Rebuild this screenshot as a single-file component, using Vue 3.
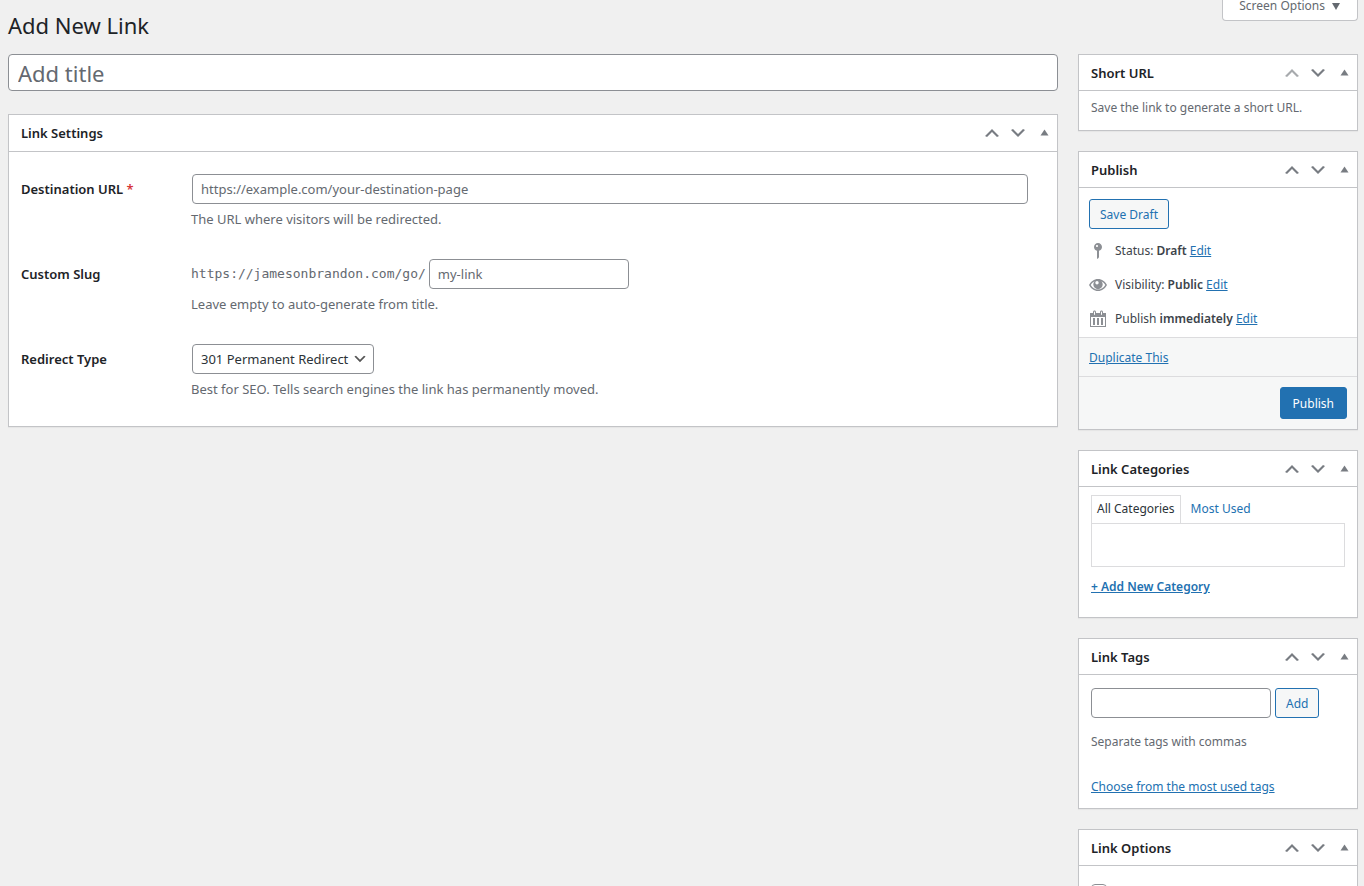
<script setup>
import { ref } from 'vue';

const title = ref('');
const destination = ref('');
const slug = ref('');
const redirectType = ref('301');
const newTag = ref('');
const noFollow = ref(false);

const redirectTypes = [
  { value: '301', label: '301 Permanent Redirect' },
  { value: '302', label: '302 Temporary Redirect' },
  { value: '307', label: '307 Temporary Redirect' }
];

// order buttons shown at the right of every box header
const handles = [
  { name: 'Move up', path: 'M15 14l-5-5-5 5-2-1 7-7 7 7z' },
  { name: 'Move down', path: 'M5 6l5 5 5-5 2 1-7 7-7-7z' },
  { name: 'Toggle panel', path: 'M6.5 12.5l4-6 4 6z' }
];

const publishRows = [
  {
    label: 'Status:',
    value: 'Draft',
    path: 'M13 6c0 1.86-1.28 3.41-3 3.86V16c0 1-2 2-2 2V9.86c-1.72-.45-3-2-3-3.86 0-2.21 1.79-4 4-4s4 1.79 4 4zM7 5c0 .55.45 1 1 1s1-.45 1-1-.45-1-1-1-1 .45-1 1z'
  },
  {
    label: 'Visibility:',
    value: 'Public',
    path: 'M9 4C5 4 2 6.500 0 10c2 3.500 5 6 9 6s7-2.500 9-6c-2-3.500-5-6-9-6zM9 14.500c-3.200 0-5.500-1.700-7.300-4.500C2.800 8.200 4 7 5.600 6.200a4.700 4.700 0 1 0 6.800 0c1.600.8 2.800 2 3.900 3.800-1.800 2.800-4.100 4.500-7.300 4.500zM8 6a1.700 1.700 0 1 1 0 3.400A1.700 1.700 0 0 1 8 6z'
  },
  {
    label: 'Publish',
    value: 'immediately',
    path: 'M14 4h3v14H1V4h3V3c0-.83.67-1.5 1.5-1.5S7 2.17 7 3v1h4V3c0-.83.67-1.5 1.5-1.5S14 2.17 14 3v1zM5 3v2.5c0 .28.22.5.5.5s.5-.22.5-.5V3c0-.28-.22-.5-.5-.5S5 2.72 5 3zm7 0v2.5c0 .28.22.5.5.5s.5-.22.5-.5V3c0-.28-.22-.5-.5-.5s-.5.22-.5.5zm4 14V8H2v9h14zM6 16V9H4v7h2zm4 0V9H8v7h2zm4 0V9h-2v7h2z'
  }
];
</script>

<template>
  <div class="wrap">
    <header class="page-head">
      <h1>Add New Link</h1>
      <button type="button" class="screen-options">
        Screen Options
        <svg viewBox="0 0 10 8" aria-hidden="true"><path d="M1 1h8L5 8z" /></svg>
      </button>
    </header>

    <div class="columns">
      <main class="main">
        <input v-model="title" class="field title" type="text" placeholder="Add title" aria-label="Add title">

        <section class="box settings">
          <div class="box-head">
            <h2>Link Settings</h2>
            <div class="handles">
              <button v-for="h in handles" :key="h.name" type="button" :aria-label="h.name">
                <svg viewBox="0 0 20 20"><path :d="h.path" /></svg>
              </button>
            </div>
          </div>
          <div class="form">
            <div class="row">
              <label for="destination">Destination URL <span class="required">*</span></label>
              <div class="cell">
                <div class="control">
                  <input id="destination" v-model="destination" class="field wide" type="url" placeholder="https://example.com/your-destination-page">
                </div>
                <p>The URL where visitors will be redirected.</p>
              </div>
            </div>
            <div class="row">
              <label for="slug">Custom Slug</label>
              <div class="cell">
                <div class="control">
                  <code>https://jamesonbrandon.com/go/</code>
                  <input id="slug" v-model="slug" class="field slug" type="text" placeholder="my-link">
                </div>
                <p>Leave empty to auto-generate from title.</p>
              </div>
            </div>
            <div class="row">
              <label for="redirect">Redirect Type</label>
              <div class="cell">
                <div class="control">
                  <select id="redirect" v-model="redirectType" class="field select">
                    <option v-for="r in redirectTypes" :key="r.value" :value="r.value">{{ r.label }}</option>
                  </select>
                </div>
                <p>Best for SEO. Tells search engines the link has permanently moved.</p>
              </div>
            </div>
          </div>
        </section>
      </main>

      <aside class="side">
        <section class="box">
          <div class="box-head">
            <h2>Short URL</h2>
            <div class="handles first">
              <button v-for="h in handles" :key="h.name" type="button" :aria-label="h.name">
                <svg viewBox="0 0 20 20"><path :d="h.path" /></svg>
              </button>
            </div>
          </div>
          <p class="short-url">Save the link to generate a short URL.</p>
        </section>

        <section class="box">
          <div class="box-head">
            <h2>Publish</h2>
            <div class="handles">
              <button v-for="h in handles" :key="h.name" type="button" :aria-label="h.name">
                <svg viewBox="0 0 20 20"><path :d="h.path" /></svg>
              </button>
            </div>
          </div>
          <div class="publish-body">
            <button type="button" class="button">Save Draft</button>
            <ul>
              <li v-for="row in publishRows" :key="row.label">
                <svg viewBox="0 0 20 20" aria-hidden="true"><path fill-rule="evenodd" :d="row.path" /></svg>
                <span>{{ row.label }} <b>{{ row.value }}</b> <a href="#">Edit</a></span>
              </li>
            </ul>
          </div>
          <div class="duplicate"><a href="#">Duplicate This</a></div>
          <div class="publish-foot">
            <button type="button" class="button primary">Publish</button>
          </div>
        </section>

        <section class="box">
          <div class="box-head">
            <h2>Link Categories</h2>
            <div class="handles">
              <button v-for="h in handles" :key="h.name" type="button" :aria-label="h.name">
                <svg viewBox="0 0 20 20"><path :d="h.path" /></svg>
              </button>
            </div>
          </div>
          <div class="categories">
            <div class="tabs">
              <a href="#" class="active">All Categories</a>
              <a href="#">Most Used</a>
            </div>
            <div class="category-list"></div>
            <a href="#" class="add-category">+ Add New Category</a>
          </div>
        </section>

        <section class="box">
          <div class="box-head">
            <h2>Link Tags</h2>
            <div class="handles">
              <button v-for="h in handles" :key="h.name" type="button" :aria-label="h.name">
                <svg viewBox="0 0 20 20"><path :d="h.path" /></svg>
              </button>
            </div>
          </div>
          <div class="tags">
            <div class="tag-entry">
              <input v-model="newTag" class="field" type="text" aria-label="Add tag">
              <button type="button" class="button">Add</button>
            </div>
            <p>Separate tags with commas</p>
            <a href="#">Choose from the most used tags</a>
          </div>
        </section>

        <section class="box">
          <div class="box-head">
            <h2>Link Options</h2>
            <div class="handles">
              <button v-for="h in handles" :key="h.name" type="button" :aria-label="h.name">
                <svg viewBox="0 0 20 20"><path :d="h.path" /></svg>
              </button>
            </div>
          </div>
          <div class="options">
            <input v-model="noFollow" type="checkbox" aria-label="Nofollow">
          </div>
        </section>
      </aside>
    </div>
  </div>
</template>

<style>
body {
  background: #f0f0f0;
}
</style>

<style scoped>
.wrap {
  box-sizing: border-box;
  height: 100vh;
  overflow: hidden;
  padding: 0 6px 0 8px;
  font-family: "Segoe UI", "Noto Sans", sans-serif;
  font-size: 12px;
  line-height: 20px;
  color: #3c434a;
}

.wrap *,
.wrap *::before {
  box-sizing: border-box;
}

h1,
h2,
p,
ul {
  margin: 0;
  padding: 0;
}

button,
input,
select {
  margin: 0;
  font-family: inherit;
  font-size: 12px;
}

a {
  color: #2271b1;
}

b {
  font-weight: 600;
}

.page-head {
  display: flex;
  justify-content: space-between;
  align-items: flex-start;
  height: 54px;
}

h1 {
  padding-top: 9px;
  font-size: 22px;
  font-weight: 400;
  line-height: 32px;
  color: #1d2327;
}

.screen-options {
  display: flex;
  align-items: center;
  gap: 6px;
  height: 21px;
  padding: 0 16px 8px;
  border: 1px solid #c3c4c7;
  border-top: 0;
  border-radius: 0 0 4px 4px;
  background: #fff;
  color: #646970;
  line-height: 12px;
}

.screen-options svg {
  width: 10px;
  height: 8px;
  fill: #646970;
}

.columns {
  display: flex;
  align-items: flex-start;
  gap: 20px;
}

.main {
  flex: 1;
  min-width: 0;
}

.side {
  display: flex;
  flex-direction: column;
  gap: 20px;
  flex: 0 0 280px;
}

.field {
  height: 30px;
  padding: 0 8px;
  border: 1px solid #8c8f94;
  border-radius: 4px;
  background: #fff;
  color: #2c3338;
  font-size: 13px;
}

.field::placeholder {
  color: #646970;
  opacity: 1;
}

.title {
  display: block;
  width: 100%;
  height: 37px;
  margin-bottom: 23px;
  padding: 0 9px;
  font-size: 22px;
}

.box {
  border: 1px solid #c3c4c7;
  background: #fff;
  box-shadow: 0 1px 1px rgba(0, 0, 0, 0.04);
}

.box-head {
  display: flex;
  justify-content: space-between;
  align-items: center;
  height: 36px;
  padding-left: 12px;
  border-bottom: 1px solid #c3c4c7;
}

.settings .box-head {
  height: 37px;
}

h2 {
  font-size: 13px;
  font-weight: 600;
  color: #1d2327;
}

.handles {
  display: flex;
}

.handles button {
  display: flex;
  align-items: center;
  justify-content: center;
  width: 26px;
  height: 34px;
  padding: 0;
  border: 0;
  background: none;
}

.handles svg {
  width: 20px;
  height: 20px;
  fill: #787c82;
}

.handles.first button:first-child svg {
  fill: #a7aaad;
}

.form {
  display: flex;
  flex-direction: column;
  gap: 30px;
  padding: 22px 29px 27px 12px;
  font-size: 13px;
}

.row {
  display: flex;
}

.row label {
  flex: 0 0 170px;
  line-height: 30px;
  font-weight: 600;
  color: #1d2327;
}

.required {
  color: #d63638;
}

.cell {
  flex: 1;
  min-width: 0;
}

.cell p {
  margin-top: 5px;
  color: #646970;
}

.control {
  display: flex;
  align-items: center;
  gap: 2px;
}

.control .field {
  margin-left: 1px;
}

.wide {
  width: 100%;
}

.control code {
  font-family: Consolas, "DejaVu Sans Mono", monospace;
  font-size: 13px;
  color: #646970;
}

.slug {
  width: 200px;
}

.select {
  appearance: none;
  padding-right: 24px;
  background: #fff url('data:image/svg+xml;charset=utf-8,<svg xmlns="http://www.w3.org/2000/svg" viewBox="0 0 20 20"><path d="M5 6l5 5 5-5 2 1-7 7-7-7z" fill="%23555"/></svg>') no-repeat right 5px center / 16px 16px;
}

.short-url {
  padding: 7px 12px 12px;
  color: #646970;
}

.button {
  height: 30px;
  padding: 0 10px;
  border: 1px solid #2271b1;
  border-radius: 3px;
  background: #f6f7f7;
  color: #2271b1;
}

.primary {
  height: 32px;
  padding: 0 12px;
  background: #2271b1;
  color: #fff;
}

.publish-body {
  padding: 11px 10px 1px;
}

.publish-body ul {
  padding-top: 5px;
  list-style: none;
}

.publish-body li {
  display: flex;
  align-items: center;
  gap: 6px;
  height: 34px;
}

.publish-body li svg {
  width: 20px;
  height: 20px;
  fill: #8c8f94;
}

.duplicate {
  padding: 10px 10px 8px;
  border-top: 1px solid #dcdcde;
  background: #f6f7f7;
}

.publish-foot {
  display: flex;
  justify-content: flex-end;
  padding: 10px;
  border-top: 1px solid #dcdcde;
  background: #f6f7f7;
}

.categories {
  padding: 8px 12px 20px;
}

.tabs {
  display: flex;
}

.tabs a {
  padding: 3px 5px 4px;
  border: 1px solid transparent;
  border-bottom: 0;
  text-decoration: none;
}

.tabs a + a {
  margin-left: 4px;
}

.tabs .active {
  border-color: #dcdcde;
  color: #2c3338;
}

.category-list {
  height: 44px;
  margin-bottom: 10px;
  border: 1px solid #dcdcde;
}

.add-category {
  font-weight: 600;
}

.tags {
  padding: 13px 12px 11px;
}

.tag-entry {
  display: flex;
  gap: 4px;
}

.tag-entry .field {
  width: 180px;
}

.tags p {
  margin: 14px 0 25px;
  color: #646970;
}

.options {
  padding: 18px 12px;
}

.options input {
  appearance: none;
  display: block;
  width: 16px;
  height: 16px;
  border: 1px solid #8c8f94;
  border-radius: 4px;
  background: #fff;
}

.options input:checked {
  background: #2271b1;
}
</style>
